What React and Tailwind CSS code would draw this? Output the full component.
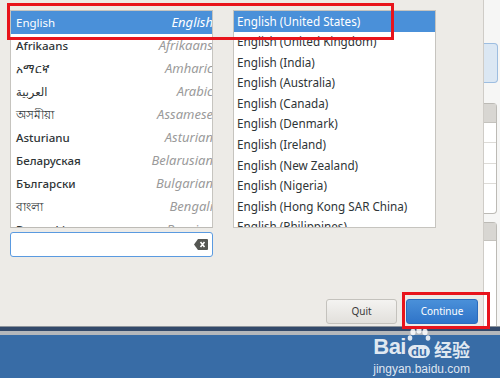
import React from "react";

const left = [
  ["Afrikaans", "Afrikaans"],
  ["አማርኛ", "Amharic"],
  ["العربية", "Arabic"],
  ["অসমীয়া", "Assamese"],
  ["Asturianu", "Asturian"],
  ["Беларуская", "Belarusian"],
  ["Български", "Bulgarian"],
  ["বাংলা", "Bengali"],
  ["Bosanski", "Bosnian"],
];

const right = [
  "English (United Kingdom)",
  "English (India)",
  "English (Australia)",
  "English (Canada)",
  "English (Denmark)",
  "English (Ireland)",
  "English (New Zealand)",
  "English (Nigeria)",
  "English (Hong Kong SAR China)",
  "English (Philippines)",
];

const font = { fontFamily: '"Noto Sans", "DejaVu Sans", sans-serif' };

function Paw() {
  return (
    <svg width="24" height="22" viewBox="0 0 24 22" className="mx-[1px]">
      <g fill="rgba(255,255,255,0.85)">
        <ellipse cx="6" cy="5" rx="2.6" ry="3.2" />
        <ellipse cx="12" cy="3.5" rx="2.6" ry="3.2" />
        <ellipse cx="18" cy="5" rx="2.6" ry="3.2" />
        <ellipse cx="3" cy="11" rx="2.3" ry="2.8" />
        <ellipse cx="21" cy="11" rx="2.3" ry="2.8" />
      </g>
    </svg>
  );
}

export default function App() {
  return (
    <div
      className="relative w-[500px] h-[378px] overflow-hidden flex flex-col bg-[#386ca6]"
      style={font}
    >
      <div className="h-[329px] flex">
        <div className="w-[483px] bg-[#edebe7] pt-[10px] pl-[10px] flex flex-col">
          <div className="flex gap-[20px]">
            <div className="w-[203px] flex flex-col">
              <div className="h-[218px] bg-white border border-[#c6c4bf] border-b-[#bdbbb6] border-b-dashed overflow-hidden">
                <div className="h-[23px] bg-[#4a90d9] flex items-center justify-between pl-[5px] text-[11.5px] text-white">
                  <span>English</span>
                  <span className="italic text-[13px] mr-[-1px]">English</span>
                </div>
                {left.map(([n, e]) => (
                  <div
                    key={e}
                    className="h-[23px] flex items-center justify-between pl-[5px] text-[11.5px]"
                  >
                    <span className="text-[#2e3436] font-medium">{n}</span>
                    <span className="italic text-[13px] text-[#9a9a9a] mr-[-1px] whitespace-nowrap">
                      {e}
                    </span>
                  </div>
                ))}
              </div>
              <div className="mt-[4px] h-[25px] bg-white border border-[#5a9ae0] rounded-[3px] flex items-center justify-end pr-[4px]">
                <svg width="14" height="11" viewBox="0 0 14 11">
                  <path d="M4 0 H13 Q14 0 14 1 V10 Q14 11 13 11 H4 L0 5.5 Z" fill="#555753" />
                  <path d="M6.5 3 L10.5 8 M10.5 3 L6.5 8" stroke="#fff" strokeWidth="1.6" />
                </svg>
              </div>
            </div>
            <div className="w-[203px] h-[218px] bg-white border border-[#c6c4bf] border-b-dashed overflow-hidden">
              <div className="h-[20.6px] bg-[#4a90d9] flex items-center pl-[3px] text-[11.7px] text-white">
                English (United States)
              </div>
              {right.map((r) => (
                <div
                  key={r}
                  className="h-[20.6px] flex items-center pl-[3px] text-[11.7px] text-[#2e3436] whitespace-nowrap"
                >
                  {r}
                </div>
              ))}
            </div>
          </div>
          <div className="mt-[42px] flex justify-end gap-[9px] pr-[5px]">
            <button className="w-[71px] h-[25px] rounded-[3px] border border-[#c4c2bd] bg-gradient-to-b from-[#f4f3f1] to-[#e2e0dc] text-[10px] text-[#3a3a3a]">
              Quit
            </button>
            <button className="w-[72px] h-[25px] rounded-[3px] border border-[#2a6bbd] bg-gradient-to-b from-[#4a90d9] to-[#2f74c8] text-[10px] text-white">
              Continue
            </button>
          </div>
        </div>
        <div className="flex-1 border-l border-[#cfccc7] bg-[#f6f6f5] flex flex-col pt-[43px]">
          <div className="h-[40px] w-[14px] rounded-r-[4px] border border-l-0 border-[#9dbde0] bg-[#dbe7f3]" />
          <div className="mt-[20px] h-[111px] w-[13px] rounded-r-[4px] border border-l-0 border-[#bcbab5] bg-white flex flex-col">
            <div className="h-[19px] bg-[#d8d6d2] border-b border-[#c4c2bd]" />
            <div className="h-[20px] border-b border-[#dddbd7]" />
            <div className="h-[21px] border-b border-[#dddbd7]" />
            <div className="h-[20px] border-b border-[#dddbd7]" />
          </div>
          <div className="mt-[8px] flex-1 w-[13px] rounded-tr-[4px] border border-l-0 border-b-0 border-[#bcbab5] bg-white">
            <div className="h-[18px] bg-[#d8d6d2] border-b border-[#c4c2bd]" />
          </div>
        </div>
      </div>
      <div className="h-[1px] bg-[#8d949c]" />
      <div className="h-[4px] bg-[#33496a]" />
      <div className="h-[4px] bg-[#b4b7bb]" />
      <div className="flex-1 bg-[#386ca6] flex justify-end pr-[30px]">
        <div className="flex flex-col items-center text-[rgba(255,255,255,0.85)] mt-[-8px]">
          <div className="flex items-end leading-none">
            <span className="text-[22px] font-bold tracking-tight" style={{ fontFamily: '"Liberation Sans", Arial, sans-serif' }}>
              Bai
            </span>
            <div className="flex flex-col items-center">
              <Paw />
              <span className="text-[13px] font-bold mt-[-4px] rounded-full bg-[rgba(255,255,255,0.85)] text-[#386ca6] px-[3px]" style={{ fontFamily: '"Liberation Sans", Arial, sans-serif' }}>
                du
              </span>
            </div>
            <span className="text-[18px] font-bold ml-[2px]" style={{ fontFamily: '"Noto Sans CJK SC", sans-serif' }}>
              经验
            </span>
          </div>
          <div className="text-[12px] mt-[2px]" style={{ fontFamily: '"Liberation Sans", Arial, sans-serif' }}>
            jingyan.baidu.com
          </div>
        </div>
      </div>

      <div className="absolute left-[7px] top-[3px] w-[387px] h-[37px] border-[3px] border-[#e8141c]" />
      <div className="absolute left-[402px] top-[292px] w-[88px] h-[37px] border-[3px] border-[#e8141c]" />
    </div>
  );
}
